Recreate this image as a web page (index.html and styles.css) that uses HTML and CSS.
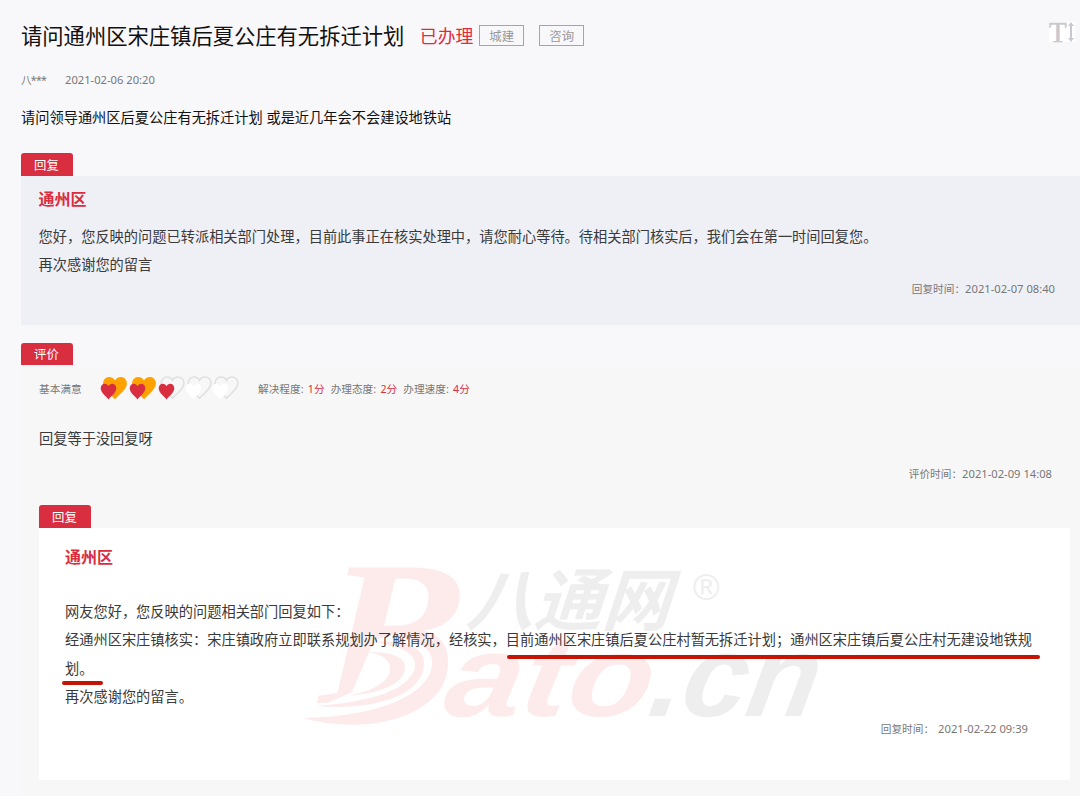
FILE: index.html
```html
<!DOCTYPE html>
<html lang="zh-CN">
<head>
    <meta charset="UTF-8">
    <meta name="viewport" content="width=device-width, initial-scale=1.0">
    <title>请问通州区宋庄镇后夏公庄有无拆迁计划</title>
    <link rel="stylesheet" href="styles.css">
</head>
<body>
    <svg width="0" height="0" class="defs">
        <symbol id="heart" viewBox="0 0 24 23" preserveAspectRatio="none">
            <path d="M12 22.3C9 18.500 1 13 1 7.200C1 3.500 3.600 1 6.700 1C9.200 1 11 2.300 12 4.300C13 2.300 14.800 1 17.300 1C20.400 1 23 3.500 23 7.200C23 13 15 18.500 12 22.300Z"/>
        </symbol>
    </svg>

    <div class="container">
        <header class="title-bar">
            <h1>请问通州区宋庄镇后夏公庄有无拆迁计划</h1>
            <span class="status">已办理</span>
            <span class="tag">城建</span>
            <span class="tag">咨询</span>
            <div class="font-size"><span>T</span><svg width="6" height="20" viewBox="0 0 6 20"><path d="M3 0L6 4H4V16H6L3 20L0 16H2V4H0Z"/></svg></div>
        </header>
        <div class="meta"><span class="user">八***</span><time>2021-02-06 20:20</time></div>
        <p class="question">请问领导通州区后夏公庄有无拆迁计划 或是近几年会不会建设地铁站</p>

        <div class="label">回复</div>
        <section class="reply">
            <h2>通州区</h2>
            <p>您好，您反映的问题已转派相关部门处理，目前此事正在核实处理中，请您耐心等待。待相关部门核实后，我们会在第一时间回复您。<br>再次感谢您的留言</p>
            <div class="time">回复时间：<time>2021-02-07 08:40</time></div>
        </section>

        <div class="label label-rating">评价</div>
        <section class="rating">
            <div class="score">
                <span class="level">基本满意</span>
                <div class="hearts">
                    <div class="pair full"><svg class="back"><use href="#heart"/></svg><svg class="front"><use href="#heart"/></svg></div>
                    <div class="pair full"><svg class="back"><use href="#heart"/></svg><svg class="front"><use href="#heart"/></svg></div>
                    <div class="pair half"><svg class="back"><use href="#heart"/></svg><svg class="front"><use href="#heart"/></svg></div>
                    <div class="pair empty"><svg class="back"><use href="#heart"/></svg><svg class="front"><use href="#heart"/></svg></div>
                    <div class="pair empty"><svg class="back"><use href="#heart"/></svg><svg class="front"><use href="#heart"/></svg></div>
                </div>
                <div class="points">
                    <span>解决程度: <em>1分</em></span>
                    <span>办理态度: <em>2分</em></span>
                    <span>办理速度: <em>4分</em></span>
                </div>
            </div>
            <p class="comment">回复等于没回复呀</p>
            <div class="time">评价时间：<time>2021-02-09 14:08</time></div>

            <div class="label label-inner">回复</div>
            <div class="reply-inner">
                <svg class="watermark" width="540" height="190" viewBox="0 0 540 190">
                    <defs>
                        <clipPath id="stem"><path d="M0 0H190V92C150 86 115 92 84 100L62 152L0 180Z"/></clipPath>
                    </defs>
                    <g class="wm-red">
                        <g clip-path="url(#stem)">
                            <text class="wm-b" transform="translate(29 163) skewX(-3)" textLength="143" lengthAdjust="spacingAndGlyphs">B</text>
                        </g>
                        <path d="M55 156C85 154 115 146 115 127C115 116 100 112 78 112C94 115 102 121 100 131C97 145 76 153 55 156Z"/>
                        <path d="M25 166C80 171 134 157 134 123C134 107 115 99 84 102C110 106 127 113 125 127C120 150 81 162 25 166Z"/>
                        <path d="M13 178C80 197 158 175 158 123C158 100 146 92 122 88L96 95C128 98 144 108 142 126C137 158 81 177 13 178Z"/>
                        <text class="wm-latin" transform="translate(151 176) skewX(-10)" textLength="207" lengthAdjust="spacingAndGlyphs">ato</text>
                    </g>
                    <g class="wm-grey">
                        <text class="wm-cn" transform="translate(175 85) skewX(-18)">八通网</text>
                        <text class="wm-reg" x="403" y="60">®</text>
                        <text class="wm-latin" transform="translate(356 176) skewX(-10)" textLength="168" lengthAdjust="spacingAndGlyphs">.cn</text>
                    </g>
                </svg>
                <div class="content">
                    <h2>通州区</h2>
                    <p>网友您好，您反映的问题相关部门回复如下：<br>经通州区宋庄镇核实：宋庄镇政府立即联系规划办了解情况，经核实，目前通州区宋庄镇后夏公庄村暂无拆迁计划；通州区宋庄镇后夏公庄村无建设地铁规划。<br>再次感谢您的留言。</p>
                    <div class="time">回复时间：<time>2021-02-22 09:39</time></div>
                </div>
                <div class="marker marker-long"></div>
                <div class="marker marker-short"></div>
            </div>
        </section>
    </div>
</body>
</html>
```
FILE: styles.css
```css
* {
    box-sizing: border-box;
}
body {
    margin: 0;
    background: #f8f7fa;
    color: #3a3a3a;
    font-family: "Noto Sans", "Noto Sans CJK SC", sans-serif;
    font-size: 14.22px;
    line-height: 28.4px;
}
h1, h2, p {
    margin: 0;
}
.defs {
    position: absolute;
}
.container {
    height: 796px;
    padding-left: 21px;
    overflow: hidden;
    display: flex;
    flex-direction: column;
}
.title-bar {
    display: flex;
    align-items: center;
    height: 72px;
    flex: none;
}
h1 {
    font-size: 21.3px;
    font-weight: 400;
    color: #111;
}
.status {
    margin: 0 6px 0 15.500px;
    font-size: 17.8px;
    color: #d92d40;
}
.tag {
    width: 45px;
    height: 21px;
    margin: -1px 15px 0 0;
    border: 1px solid #a5a5a8;
    color: #999;
    font-size: 12.4px;
    line-height: 21px;
    text-align: center;
}
.font-size {
    display: flex;
    align-items: center;
    gap: 1px;
    width: 26px;
    height: 20px;
    margin: -8px 5px 0 auto;
    background: #fff;
    color: #c9c8cc;
    font: 29px/20px "Liberation Serif", serif;
    -webkit-text-stroke: 0.5px #c9c8cc;
}
.font-size svg {
    fill: #c9c8cc;
    flex: none;
}
.meta {
    display: flex;
    height: 16px;
    color: #777;
    font-size: 10.67px;
    line-height: 16px;
}
.user {
    width: 44px;
    letter-spacing: -0.8px;
}
time {
    font-size: 11.2px;
}
.question {
    margin-top: 16px;
    height: 28px;
    color: #111;
}
.label {
    width: 52px;
    height: 23px;
    flex: none;
    margin-top: 21px;
    padding-right: 1px;
    border-radius: 3px 3px 0 0;
    background: #d92d40;
    color: #fff;
    font-size: 12.4px;
    line-height: 25px;
    text-align: center;
}
.reply {
    height: 149px;
    flex: none;
    padding: 9px 25px 0 17.500px;
    background: #eff0f6;
}
h2 {
    color: #d92d40;
    font-size: 16px;
    line-height: 28px;
}
.reply p {
    margin-top: 10px;
}
.time {
    color: #777;
    font-size: 10.67px;
    line-height: 20px;
    text-align: right;
}
.reply .time {
    margin-top: -1px;
}
.label-rating {
    height: 22px;
    margin-top: 18px;
    line-height: 24px;
}
.rating {
    flex: 1;
    padding-left: 18px;
    background: #f7f7f7;
}
.score {
    display: flex;
    align-items: center;
    height: 48px;
    color: #777;
    font-size: 10.67px;
}
.level {
    width: 61px;
}
.hearts {
    display: flex;
    gap: 2px;
    width: 158px;
    margin-top: -2px;
}
.pair {
    position: relative;
    width: 27px;
    height: 24px;
}
.half, .empty {
    width: 25px;
}
.pair svg {
    position: absolute;
    overflow: visible;
}
.back {
    left: 2px;
    top: 0;
    width: 26px;
    height: 24px;
    fill: #f7f7f7;
    stroke: #e0e0e0;
    stroke-width: 1.5px;
}
.half .back, .empty .back {
    width: 25px;
    height: 23px;
}
.front {
    left: 0;
    top: 7px;
    width: 17px;
    height: 17px;
    fill: #fff;
}
.full .back {
    fill: #ffa200;
    stroke: none;
}
.full .front, .half .front {
    fill: #d92d40;
}
.points {
    display: flex;
    gap: 6px;
    word-spacing: 1.6px;
}
.points em {
    color: #d92d40;
    font-style: normal;
}
.comment {
    margin-top: 12px;
}
.rating > .time {
    margin: 11px 28px 0 0;
}
.label-inner {
    margin-top: 21px;
}
.reply-inner {
    position: relative;
    height: 252px;
    margin-right: 10px;
    padding: 15px 42px 0 26px;
    background: #fff;
}
.reply-inner p {
    width: 970px;
    margin-top: 26.400px;
}
.content {
    position: relative;
}
.content .time {
    margin-top: 7.600px;
}
.content time {
    margin-left: 4px;
}
.watermark {
    position: absolute;
    left: 251px;
    top: 12px;
}
.wm-red {
    fill: #fdebec;
}
.wm-grey {
    fill: #eeeeee;
}
.wm-b {
    font: italic bold 207px "Liberation Serif", serif;
}
.wm-latin {
    font: italic bold 116px "Liberation Sans", sans-serif;
}
.wm-cn {
    font: bold 68px "Noto Sans CJK SC", sans-serif;
}
.wm-reg {
    font: 36px "Liberation Sans", sans-serif;
}
.marker {
    position: absolute;
    height: 4px;
    border-radius: 2px;
    background: #c31406;
}
.marker-long {
    left: 468px;
    top: 127px;
    width: 533px;
}
.marker-short {
    left: 23px;
    top: 153px;
    width: 41px;
}
```
